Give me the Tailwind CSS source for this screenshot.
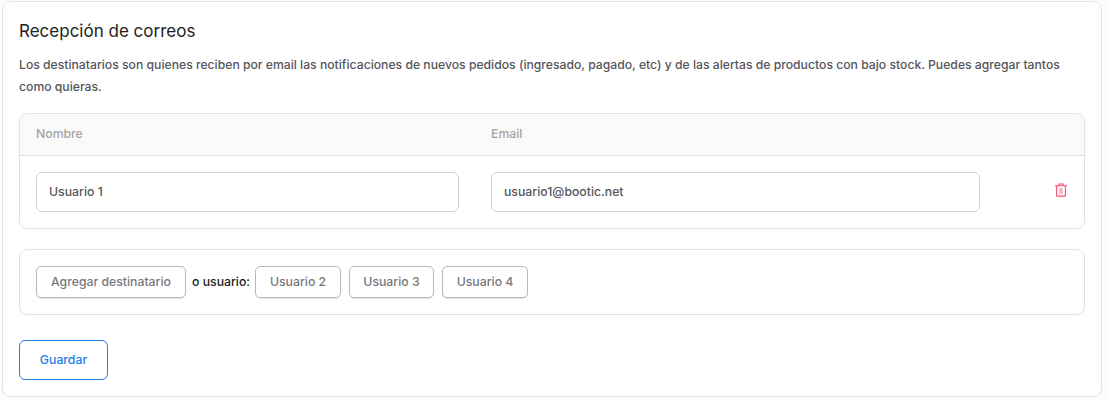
<!DOCTYPE html>
<html lang="en">

<head>
    <meta charset="UTF-8">
    <meta name="viewport" content="width=device-width, initial-scale=1.0">
    <script src="https://cdn.jsdelivr.net/npm/@tailwindcss/browser@4"></script>
    <title>Recepción de correos</title>
</head>

<body class="w-[1108px] h-[401px] overflow-hidden bg-[#fcfcfc] font-['Inter',sans-serif]">
    <div class="ml-[2px] mt-px w-[1100px] h-[396px] bg-white border border-[#e4e4e4] rounded-[8px] pt-[17px] px-4">
        <h2 class="text-[17px] leading-[24px] text-[#222222]">Recepción de correos</h2>
        <p class="mt-[11px] text-[12.2px] leading-[22px] font-medium text-[#55555c]">Los destinatarios son quienes reciben por email las notificaciones de nuevos pedidos (ingresado, pagado, etc) y de las alertas de productos con bajo stock. Puedes agregar tantos como quieras.</p>

        <div class="mt-[15px] w-[1066px] border border-[#e2e2e2] rounded-[8px] overflow-hidden">
            <div class="flex items-center h-[42px] pl-4 bg-[#fafafa] border-b border-[#e2e2e2] text-[12.25px] font-medium text-[#a3a3a3]">
                <span class="w-[455px]">Nombre</span>
                <span>Email</span>
            </div>
            <div class="flex items-center h-[72px] pl-4">
                <div class="w-[423px] h-10 flex items-center px-3 border border-[#d2d2d2] rounded-[6px] text-[12.25px] font-medium text-[#55555c]">Usuario 1</div>
                <div class="ml-8 w-[489px] h-10 flex items-center px-3 border border-[#d2d2d2] rounded-[6px] text-[12.25px] font-medium text-[#55555c]">usuario1@bootic.net</div>
                <svg class="ml-[74px] mb-1 w-[14px] h-[14px] text-[#ff4d73]" viewBox="0 0 14 14" fill="none" stroke="currentColor" stroke-width="1.1">
                    <path d="M1 2.8h12M4.8 2.8V1h4.4v1.8" />
                    <path d="M2.6 2.8v9.6c0 .4.3.7.7.7h7.4c.4 0 .7-.3.7-.7V2.8" />
                    <rect x="5.2" y="5.2" width="3.6" height="5.6" fill="currentColor" fill-opacity="0.45" stroke="none" />
                </svg>
            </div>
        </div>

        <div class="mt-5 w-[1066px] h-[66px] flex items-center pl-4 border border-[#e2e2e2] rounded-[8px]">
            <button class="w-[150px] h-8 border border-[#b9b9b9] rounded-[5px] shadow-[0_1px_1px_rgba(0,0,0,0.1)] text-[12.25px] font-medium text-[#77777c]">Agregar destinatario</button>
            <span class="ml-[6px] w-[57px] text-[12.25px] font-medium text-[#222222] whitespace-nowrap">o usuario:</span>
            <button class="ml-[6px] w-[86px] h-8 border border-[#b9b9b9] rounded-[5px] shadow-[0_1px_1px_rgba(0,0,0,0.1)] text-[12.25px] font-medium text-[#77777c]">Usuario 2</button>
            <button class="ml-2 w-[85px] h-8 border border-[#b9b9b9] rounded-[5px] shadow-[0_1px_1px_rgba(0,0,0,0.1)] text-[12.25px] font-medium text-[#77777c]">Usuario 3</button>
            <button class="ml-2 w-[86px] h-8 border border-[#b9b9b9] rounded-[5px] shadow-[0_1px_1px_rgba(0,0,0,0.1)] text-[12.25px] font-medium text-[#77777c]">Usuario 4</button>
        </div>

        <button class="block mt-[25px] w-[89px] h-10 border border-[#1f7fe8] rounded-[6px] text-[12.25px] font-medium text-[#1a7ee8]">Guardar</button>
    </div>
</body>

</html>
